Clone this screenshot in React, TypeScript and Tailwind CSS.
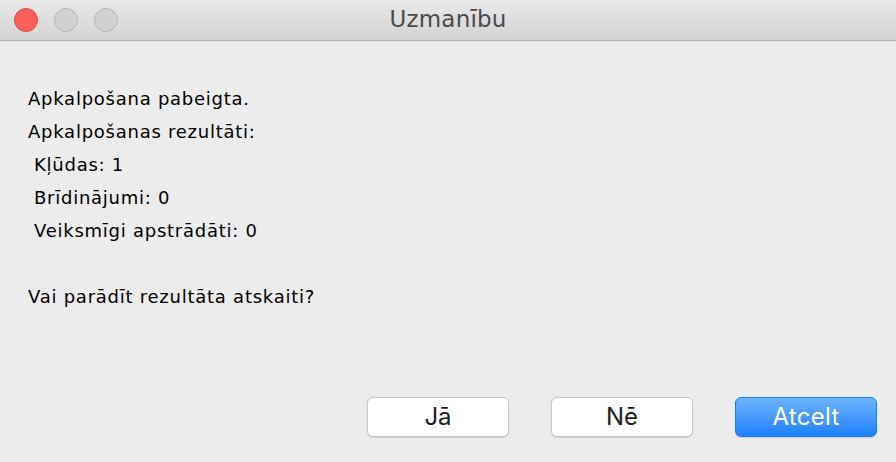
export default function App() {
  const body = { fontFamily: '"DejaVu Sans", "Liberation Sans", sans-serif' };
  const btn = { fontFamily: 'Inter, "Liberation Sans", sans-serif' };

  return (
    <div className="w-[896px] h-[462px] flex flex-col bg-[#ececec] overflow-hidden">
      {/* Title bar */}
      <div className="h-[41px] shrink-0 grid grid-cols-[1fr_auto_1fr] items-center bg-gradient-to-b from-[#e9e9e9] to-[#d3d3d3] border-b border-[#b1b1b1]">
        <div className="flex items-center gap-[16px] pl-[14px]">
          <span className="w-[24px] h-[24px] rounded-full bg-[#fc5f57] border border-[#e04a43]" />
          <span className="w-[24px] h-[24px] rounded-full bg-[#d1d1d1] border border-[#b6b6b6]" />
          <span className="w-[24px] h-[24px] rounded-full bg-[#d1d1d1] border border-[#b6b6b6]" />
        </div>
        <div
          className="text-[23px] text-[#4a4a4a] leading-none -mt-[1px] tracking-[0.2px]"
          style={body}
        >
          Uzmanību
        </div>
        <div />
      </div>

      {/* Message */}
      <div
        className="flex-1 pt-[41px] pl-[28px] text-[18px] leading-[33px] tracking-[0.75px] text-black"
        style={body}
      >
        <p>Apkalpošana pabeigta.</p>
        <p>Apkalpošanas rezultāti:</p>
        <p className="pl-[6px]">Kļūdas: 1</p>
        <p className="pl-[6px]">Brīdinājumi: 0</p>
        <p className="pl-[6px]">Veiksmīgi apstrādāti: 0</p>
        <p className="h-[33px]" />
        <p>Vai parādīt rezultāta atskaiti?</p>
      </div>

      {/* Buttons */}
      <div className="flex justify-end gap-[42px] pr-[19px] pb-[25px]" style={btn}>
        <button className="w-[142px] h-[40px] rounded-[6px] bg-white border border-[#c6c6c6] shadow-[0_1px_1px_rgba(0,0,0,0.12)] text-[24px] text-[#1c1c1c]">
          Jā
        </button>
        <button className="w-[142px] h-[40px] rounded-[6px] bg-white border border-[#c6c6c6] shadow-[0_1px_1px_rgba(0,0,0,0.12)] text-[24px] text-[#1c1c1c]">
          Nē
        </button>
        <button className="w-[142px] h-[40px] rounded-[6px] bg-gradient-to-b from-[#6cb4fb] to-[#197ffb] border border-[#1a7cf0] shadow-[0_1px_1px_rgba(0,0,0,0.12)] text-[24px] tracking-[0.3px] text-white">
          Atcelt
        </button>
      </div>
    </div>
  );
}
